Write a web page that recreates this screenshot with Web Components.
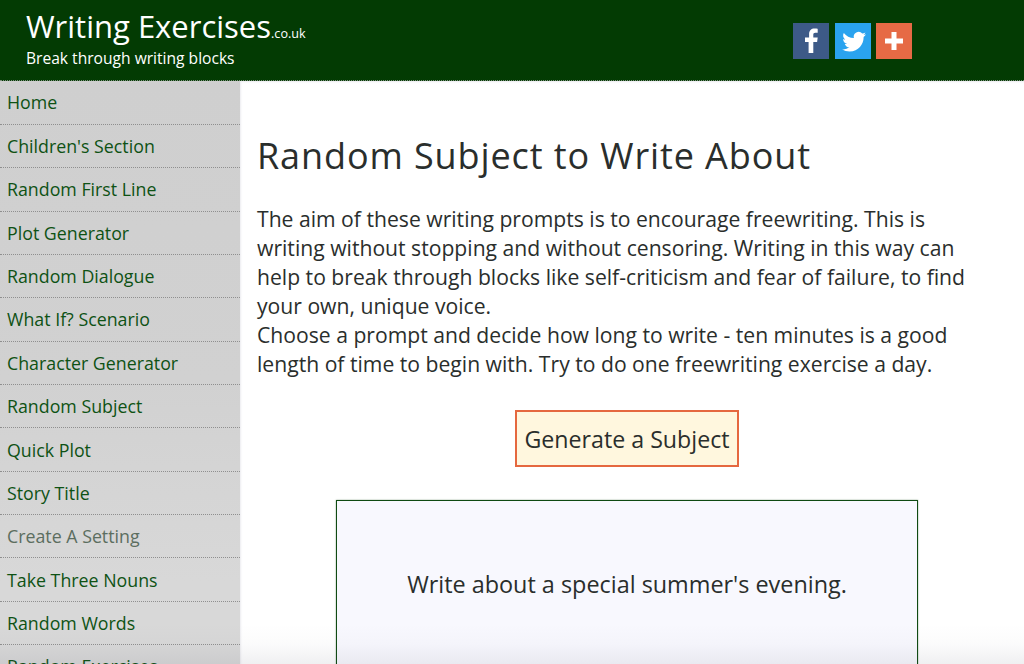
<!DOCTYPE html>
<html>
<head>
<meta charset="utf-8">
<title>Random Subject to Write About</title>
<style>
  html, body { margin: 0; padding: 0; height: 100%; overflow: hidden; background: #fff; }
  body { font-family: "Open Sans", sans-serif; color: #2a2e2c; }
  #page { display: block; position: relative; height: 664px; overflow: hidden; }
</style>
</head>
<body>
<div id="page">
  <site-header></site-header>
  <page-body>
    <side-nav slot="nav">
      <nav-item>Home</nav-item>
      <nav-item>Children's Section</nav-item>
      <nav-item>Random First Line</nav-item>
      <nav-item>Plot Generator</nav-item>
      <nav-item>Random Dialogue</nav-item>
      <nav-item>What If? Scenario</nav-item>
      <nav-item>Character Generator</nav-item>
      <nav-item>Random Subject</nav-item>
      <nav-item>Quick Plot</nav-item>
      <nav-item>Story Title</nav-item>
      <nav-item muted>Create A Setting</nav-item>
      <nav-item>Take Three Nouns</nav-item>
      <nav-item>Random Words</nav-item>
      <nav-item>Random Exercises</nav-item>
    </side-nav>
    <main-panel>
      <h-title>Random Subject to Write About</h-title>
      <intro-text>
        The aim of these writing prompts is to encourage freewriting. This is writing without stopping and without censoring. Writing in this way can help to break through blocks like self-criticism and fear of failure, to find your own, unique voice.<br>
        Choose a prompt and decide how long to write - ten minutes is a good length of time to begin with. Try to do one freewriting exercise a day.
      </intro-text>
      <generate-button>Generate a Subject</generate-button>
      <result-box>Write about a special summer's evening.</result-box>
    </main-panel>
  </page-body>
  <bottom-fade></bottom-fade>
</div>

<script>
  function define (name, css, html) {
    customElements.define(name, class extends HTMLElement {
      constructor () {
        super()
        this.attachShadow({ mode: 'open' }).innerHTML = `<style>${css}</style>${html}`
      }
    })
  }

  define('site-header', `
    :host { display: flex; justify-content: space-between; height: 81px; box-sizing: border-box;
      background: #033b03; color: #fff; padding: 8px 112px 0 26px; border-bottom: 1px dotted #7d8f7d; }
    .title { font-size: 31px; line-height: 36px; }
    .tld { font-size: 12.6px; }
    .tag { font-size: 15.6px; line-height: 22px; margin-top: -5px; }
    .social { display: flex; gap: 5.5px; padding-top: 15px; }
    svg { width: 36px; height: 36px; display: block; }
  `, `
    <div>
      <div class="title">Writing Exercises<span class="tld">.co.uk</span></div>
      <div class="tag">Break through writing blocks</div>
    </div>
    <div class="social">
      <svg viewBox="0 0 36 36"><rect width="36" height="36" fill="#3d5a87"/><path fill="#fff" d="M20.300 30V19h3.800l.6-4.600h-4.400v-2.600c0-1.300.4-2.100 2.100-2.100h2.300V5.800c-.5-.1-1.800-.2-3.200-.2-3.200 0-5.400 2-5.400 5.500v3.300H12v4.600h3.600v11z"/></svg>
      <svg viewBox="0 0 36 36"><rect width="36" height="36" fill="#2aa3ef"/><path fill="#fff" d="M31 11.300c-.9.400-1.800.7-2.800.8 1-.6 1.800-1.600 2.200-2.700-.9.600-2 1-3.100 1.200a4.900 4.900 0 0 0-8.400 4.500c-4.100-.2-7.700-2.200-10.100-5.200a4.900 4.900 0 0 0 1.500 6.600c-.8 0-1.600-.2-2.200-.6v.1c0 2.400 1.700 4.400 3.900 4.800-.7.200-1.500.2-2.200.1.600 2 2.400 3.400 4.600 3.400a9.900 9.900 0 0 1-7.300 2c2.200 1.400 4.800 2.200 7.500 2.200 9 0 14-7.500 14-14v-.6c1-.7 1.800-1.600 2.400-2.600z"/></svg>
      <svg viewBox="0 0 36 36"><rect width="36" height="36" fill="#e66a45"/><path fill="#fff" d="M15.500 9h5v6.500H27v5h-6.500V27h-5v-6.500H9v-5h6.500z"/></svg>
    </div>
  `)

  define('page-body', `
    :host { display: flex; height: 583px; }
    .nav { flex: 0 0 240px; }
    .main { flex: 1; min-width: 0; box-shadow: inset 2px 2px 2px -1px #ececf0; }
  `, `
    <div class="nav"><slot name="nav"></slot></div>
    <div class="main"><slot></slot></div>
  `)

  define('side-nav', `
    :host { display: block; height: 100%; overflow: hidden; box-sizing: border-box;
      background: linear-gradient(#cfcfcf 0, #d1d1d1 300px, #d8d8d8 500px); }
  `, '<slot></slot>')

  define('nav-item', `
    :host { display: flex; align-items: center; height: 43.35px; box-sizing: border-box;
      padding: 0 0 0 7px; font-size: 17.8px; color: #0e5214; border-bottom: 1px dotted #8f8f8f; }
    :host(:first-child) { height: 43.95px; padding-bottom: 1px; }
    :host([muted]) { color: #5c6e60; }
  `, '<slot></slot>')

  define('main-panel', `
    :host { display: flex; flex-direction: column; align-items: flex-start; padding: 0 0 0 17px; }
  `, '<slot></slot>')

  define('h-title', `
    :host { display: block; font-size: 36px; line-height: 48px; letter-spacing: 0.9px; margin-top: 51px; }
  `, '<slot></slot>')

  define('intro-text', `
    :host { display: block; font-size: 21.15px; line-height: 28.9px; width: 720px; margin-top: 25px; }
  `, '<slot></slot>')

  define('generate-button', `
    :host { display: block; align-self: center; box-sizing: border-box; margin: 32px 0 0 -27px; height: 57px; padding: 0 7px;
      line-height: 55px; font-size: 23.2px; background: #fff7de; border: 2px solid #e5683f; }
  `, '<slot></slot>')

  define('result-box', `
    :host { display: block; box-sizing: border-box; width: 582px; height: 200px; margin: 33px 0 0 79px; padding-top: 67px;
      text-align: center; font-size: 23.4px; line-height: 32px; background: #f8f8fe; border: 1px solid #0f4a12;
      box-shadow: 0 0 1.5px rgba(15, 74, 18, 0.5); }
  `, '<slot></slot>')

  // faint fade along the bottom edge, sits over everything
  define('bottom-fade', `
    :host { position: absolute; left: 0; right: 0; bottom: 0; height: 40px; pointer-events: none;
      background: linear-gradient(rgba(60, 60, 80, 0), rgba(60, 60, 80, 0.02) 50%, rgba(60, 60, 80, 0.08)); }
  `, '')
</script>
</body>
</html>
